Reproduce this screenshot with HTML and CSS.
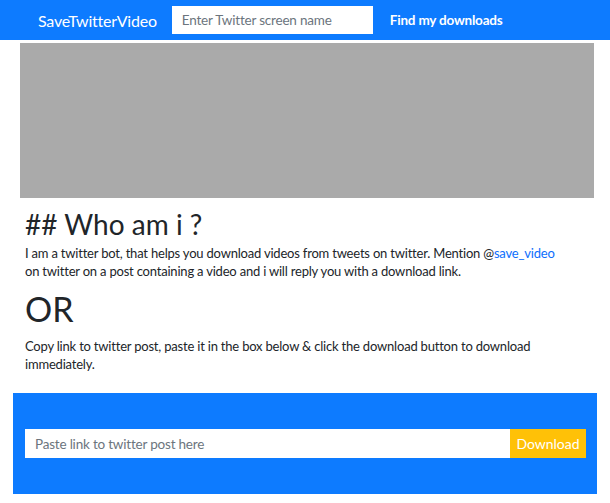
FILE: index.html
```html
<!DOCTYPE html>
<html lang="en">
<head>
    <meta charset="UTF-8">
    <meta name="viewport" content="width=device-width, initial-scale=1.0">
    <title>SaveTwitterVideo</title>
    <link rel="stylesheet" href="styles.css">
</head>
<body>
    <nav class="navbar">
        <a class="brand" href="#">SaveTwitterVideo</a>
        <input type="text" class="nav-input" placeholder="Enter Twitter screen name">
        <a class="nav-link" href="#">Find my downloads</a>
    </nav>

    <div class="banner"></div>

    <div class="about">
        <h2>## Who am i ?</h2>
        <p>I am a twitter bot, that helps you download videos from tweets on twitter. Mention @<a href="#">save_video</a> on twitter on a post containing a video and i will reply you with a download link.</p>
        <h1>OR</h1>
        <p>Copy link to twitter post, paste it in the box below &amp; click the download button to download immediately.</p>
    </div>

    <div class="download-box">
        <form class="download-form">
            <input type="text" placeholder="Paste link to twitter post here">
            <button type="button">Download</button>
        </form>
    </div>
</body>
</html>
```

FILE: styles.css
```css
body {
    font-family: Lato, "Noto Sans", sans-serif;
    margin: 0;
    color: #212529;
    background-color: #fff;
}

.navbar {
    background-color: #0d7bff;
    height: 40px;
    display: flex;
    align-items: center;
    padding: 0 0 0 38px;
}

.brand {
    color: #fff;
    font-size: 16px;
    letter-spacing: -0.2px;
    text-decoration: none;
    margin-right: 15px;
}

.nav-input {
    width: 201px;
    height: 28px;
    box-sizing: border-box;
    border: none;
    padding: 0 10px;
    font-family: inherit;
    font-size: 13.5px;
    letter-spacing: -0.2px;
    margin-right: 17px;
}

.nav-input::placeholder {
    color: #6c757d;
}

.nav-link {
    color: #fff;
    font-size: 13.5px;
    font-weight: bold;
    letter-spacing: -0.2px;
    text-decoration: none;
}

.banner {
    background-color: #aaa;
    height: 155px;
    margin: 3px 16px 0 20px;
}

.about {
    padding: 0 45px 0 25px;
}

.about h2 {
    font-weight: normal;
    font-size: 28px;
    margin: 9px 0 3px;
}

.about h1 {
    font-weight: normal;
    font-size: 34px;
    margin: 8px 0 8px;
}

.about p {
    font-size: 13px;
    letter-spacing: -0.2px;
    line-height: 18px;
    margin: 0;
}

.about a {
    color: #0d6efd;
    text-decoration: none;
}

.download-box {
    background-color: #0d7bff;
    margin: 20px 13px 0 13px;
    height: 101px;
    display: flex;
    align-items: center;
    padding: 0 11px 0 12px;
}

.download-form {
    display: flex;
    width: 100%;
    height: 29px;
}

.download-form input {
    flex-grow: 1;
    border: none;
    padding: 0 10px;
    font-family: inherit;
    font-size: 13.5px;
    letter-spacing: -0.2px;
}

.download-form input::placeholder {
    color: #6c757d;
}

.download-form button {
    width: 76px;
    border: none;
    background-color: #ffc107;
    color: #fff;
    font-family: inherit;
    font-size: 14px;
    cursor: pointer;
}
```
